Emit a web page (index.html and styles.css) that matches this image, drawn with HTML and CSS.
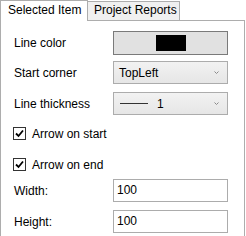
FILE: index.html
```html
<!DOCTYPE html>
<html>
<head>
<meta charset="utf-8">
<link rel="stylesheet" href="styles.css">
</head>
<body>
<div class="tabs">
  <div class="tab tab-active">Selected Item</div>
  <div class="tab">Project Reports</div>
</div>
<div class="panel">
  <div class="row row-color">
    <span class="label">Line color</span>
    <div class="color-btn"><div class="swatch"></div></div>
  </div>
  <div class="row row-corner">
    <span class="label">Start corner</span>
    <div class="combo"><span class="combo-text">TopLeft</span><svg class="chev" width="5" height="3" viewBox="0 0 5 3"><polyline points="0.5,0.5 2.5,2.5 4.5,0.5" fill="none" stroke="#8a8a8a" stroke-width="1"/></svg></div>
  </div>
  <div class="row row-thick">
    <span class="label">Line thickness</span>
    <div class="combo"><span class="line-sample"></span><span class="combo-num">1</span><svg class="chev" width="5" height="3" viewBox="0 0 5 3"><polyline points="0.5,0.5 2.5,2.5 4.5,0.5" fill="none" stroke="#8a8a8a" stroke-width="1"/></svg></div>
  </div>
  <div class="check check-start">
    <span class="box"><svg width="11" height="11" viewBox="0 0 11 11"><path d="M2 5.5 L4.5 8 L9 2.5" fill="none" stroke="#000" stroke-width="1.8"/></svg></span>
    <span class="check-label">Arrow on start</span>
  </div>
  <div class="check check-end">
    <span class="box"><svg width="11" height="11" viewBox="0 0 11 11"><path d="M2 5.5 L4.5 8 L9 2.5" fill="none" stroke="#000" stroke-width="1.8"/></svg></span>
    <span class="check-label">Arrow on end</span>
  </div>
  <div class="row row-width">
    <span class="label">Width:</span>
    <div class="input">100</div>
  </div>
  <div class="row row-height">
    <span class="label">Height:</span>
    <div class="input">100</div>
  </div>
</div>
</body>
</html>
```
FILE: styles.css
```css
html, body {
  margin: 0;
  padding: 0;
  background: #fff;
}
body {
  width: 246px;
  height: 236px;
  overflow: hidden;
  font-family: "Liberation Sans", Arial, sans-serif;
  font-size: 12px;
  color: #000;
}
.tabs {
  display: flex;
  align-items: flex-end;
  height: 20px;
  position: relative;
  z-index: 1;
}
.tab {
  box-sizing: border-box;
  height: 19px;
  width: 93px;
  margin-left: -1px;
  padding-left: 6px;
  line-height: 17px;
  border: 1px solid #adadad;
  border-bottom: none;
  background: #f0f0f0;
  white-space: nowrap;
}
.tab-active {
  margin-left: 0;
  width: 88px;
  height: 21px;
  margin-bottom: -1px;
  padding-left: 7px;
  line-height: 19px;
  background: #fff;
}
.panel {
  box-sizing: border-box;
  width: 245px;
  height: 216px;
  border: 1px solid #adadad;
  border-bottom: none;
  padding: 10px 0 0 0;
}
.row {
  display: flex;
  align-items: center;
  height: 23px;
}
.row-color { height: 24px; }
.row-corner { margin-top: 6px; }
.row-thick { margin-top: 8px; }
.row-width { margin-top: 8px; }
.row-height { margin-top: 8px; }
.label {
  width: 99px;
  padding-left: 13px;
  flex: none;
}
.color-btn {
  box-sizing: border-box;
  width: 115px;
  height: 24px;
  border: 1px solid #7a7a7a;
  background: #e1e1e1;
  display: flex;
  align-items: center;
  justify-content: center;
}
.swatch {
  width: 30px;
  height: 16px;
  background: #000;
}
.combo {
  box-sizing: border-box;
  width: 115px;
  height: 23px;
  border: 1px solid #acacac;
  background: linear-gradient(#f2f2f2, #e6e6e6);
  display: flex;
  align-items: center;
  padding-left: 5px;
}
.combo-text { flex: 1; }
.line-sample {
  width: 28px;
  height: 1px;
  background: #333;
  margin-left: 1px;
}
.combo-num {
  margin-left: 9px;
  flex: 1;
}
.chev {
  margin-right: 8px;
  flex: none;
}
.check {
  display: flex;
  align-items: center;
  height: 13px;
  padding-left: 12px;
}
.check-start { margin-top: 12px; }
.check-end { margin-top: 18px; }
.box {
  box-sizing: border-box;
  width: 13px;
  height: 13px;
  border: 1px solid #333;
  background: #fff;
  display: flex;
  align-items: center;
  justify-content: center;
}
.check-label { margin-left: 6px; }
.input {
  box-sizing: border-box;
  width: 115px;
  height: 23px;
  border: 1px solid #acacac;
  background: #fff;
  padding-left: 3px;
  line-height: 21px;
}
```
